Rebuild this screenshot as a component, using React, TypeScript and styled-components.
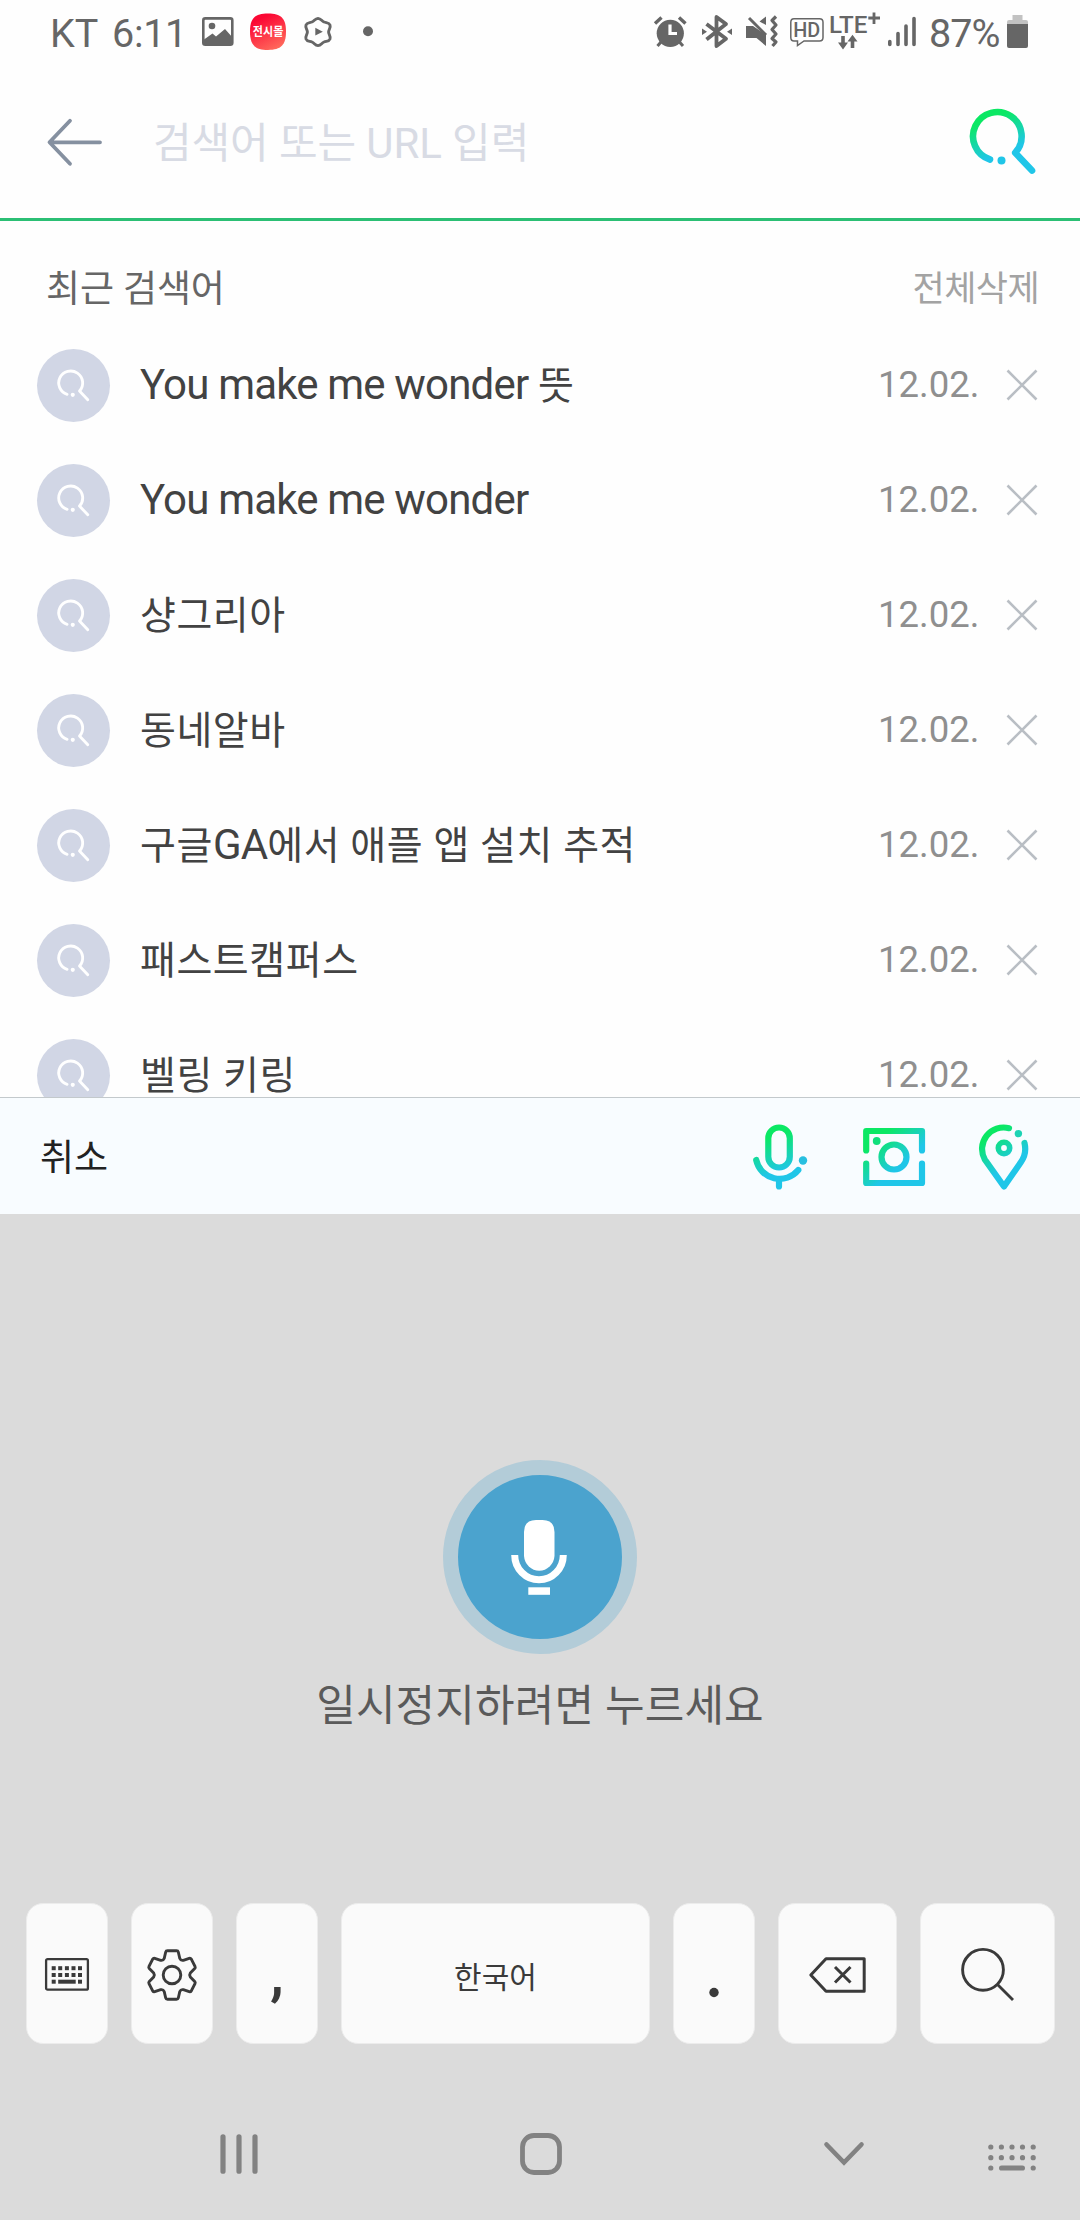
import React from 'react';
import styled, { createGlobalStyle } from 'styled-components';

const Global = createGlobalStyle`
  *, *::before, *::after { box-sizing: border-box; }
  body { margin: 0; background: #fff; }
  svg { display: block; flex: none; overflow: visible; }
`;

const Screen = styled.div`
  width: 1080px;
  height: 2220px;
  display: flex;
  flex-direction: column;
  overflow: hidden;
  background: #fefefe;
  font-family: Roboto, 'Noto Sans CJK KR', sans-serif;
`;

/* ---------- status bar ---------- */

const StatusBar = styled.header`
  height: 64px;
  flex: none;
  display: flex;
  justify-content: space-between;
  align-items: flex-start;
  padding: 11px 52px 0 50px;
  color: #666;
`;

const StatusGroup = styled.div`
  display: flex;
  align-items: center;
  height: 42px;
`;

const StatusText = styled.span<{ $width: number; $spacing?: number; $left?: number }>`
  width: ${(p) => p.$width}px;
  margin-left: ${(p) => p.$left ?? 0}px;
  font-size: 39.5px;
  line-height: 42px;
  letter-spacing: ${(p) => p.$spacing ?? 0}px;
  white-space: nowrap;
  padding-top: 3px;
`;

const StatusIcon = styled.svg<{ $left?: number }>`
  margin-left: ${(p) => p.$left ?? 0}px;
  height: 42px;
`;

/* ---------- search bar ---------- */

const SearchBar = styled.div`
  height: 157px;
  flex: none;
  display: flex;
  align-items: center;
  padding: 0 44px 0 47px;
  border-bottom: 3px solid #2bbf74;
`;

const Placeholder = styled.div`
  flex: 1;
  margin-left: 50px;
  padding-top: 5px;
  font-size: 42px;
  line-height: 60px;
  letter-spacing: -0.1px;
  color: #d8dbe4;
  white-space: nowrap;
`;

/* ---------- recent searches ---------- */

const Recent = styled.section`
  height: 876px;
  flex: none;
  overflow: hidden;
`;

const RecentHeader = styled.div`
  height: 107px;
  display: flex;
  justify-content: space-between;
  align-items: center;
  padding: 30px 41px 0 46px;
`;

const RecentTitle = styled.h2`
  margin: 0;
  font-size: 37px;
  font-weight: 400;
  line-height: 50px;
  letter-spacing: -0.1px;
  color: #666;
`;

const ClearAll = styled.button`
  padding: 0;
  border: 0;
  background: none;
  font: inherit;
  font-size: 35px;
  line-height: 50px;
  letter-spacing: -0.6px;
  color: #a3a3a3;
`;

const List = styled.ul`
  margin: 0;
  padding: 0;
  list-style: none;
`;

const Row = styled.li`
  height: 115px;
  display: flex;
  align-items: center;
  padding: 0 43px 0 37px;
`;

const Badge = styled.span`
  width: 73px;
  height: 73px;
  flex: none;
  display: grid;
  place-items: center;
  border-radius: 50%;
  background: #d1d6e5;
`;

const Term = styled.span`
  flex: 1;
  margin: 0 0 1px 30px;
  font-size: 42px;
  line-height: 42px;
  letter-spacing: -0.82px;
  color: #424242;
  white-space: nowrap;
`;

const Hangul = styled.span`
  font-size: 39px;
  line-height: 39px;
  letter-spacing: 0.55px;
`;

const DateText = styled.time`
  width: 129px;
  margin-bottom: 1px;
  font-size: 36.5px;
  line-height: 42px;
  color: #8f8f8f;
`;

/* ---------- toolbar ---------- */

const Toolbar = styled.div`
  height: 117px;
  flex: none;
  display: flex;
  align-items: center;
  padding: 2px 51px 0 40px;
  border-top: 1px solid #c3c9cc;
  background: #f8fcff;
`;

const Cancel = styled.button`
  margin-right: auto;
  padding: 4px 0 0;
  border: 0;
  background: none;
  font: inherit;
  font-size: 37px;
  line-height: 50px;
  letter-spacing: 0;
  color: #222;
`;

const ToolIcon = styled.svg<{ $gap?: number }>`
  margin-left: ${(p) => p.$gap ?? 0}px;
`;

/* ---------- keyboard ---------- */

const Keyboard = styled.main`
  flex: 1;
  display: flex;
  flex-direction: column;
  background: #dbdbdb;
`;

const VoicePanel = styled.div`
  height: 689px;
  flex: none;
  display: flex;
  flex-direction: column;
  align-items: center;
  padding-top: 246px;
`;

const MicButton = styled.button`
  width: 194px;
  height: 194px;
  border: 15.5px solid #b3ccd8;
  border-radius: 50%;
  background: #4ba3ce;
  display: flex;
  justify-content: center;
  padding: 45px 3px 0 0;
`;

const VoiceHint = styled.p`
  margin: 22px 0 0;
  font-size: 43px;
  line-height: 60px;
  letter-spacing: 0.15px;
  color: #5a5a5a;
  white-space: nowrap;
`;

const KeyRow = styled.div`
  flex: none;
  display: flex;
  gap: 23px;
  padding: 0 25px 0 26px;
`;

const Key = styled.button<{ $width?: number }>`
  width: ${(p) => p.$width ?? 82}px;
  flex: none;
  height: 141px;
  padding: 2px 0 0;
  display: flex;
  align-items: center;
  justify-content: center;
  border: 1px solid #ececec;
  border-radius: 17px;
  background: #fafafa;
  color: #3a3a3a;
  font: inherit;
  font-size: 30px;
`;

const Comma = styled.span`
  margin-top: -4px;
  font-size: 62px;
  font-weight: 500;
  line-height: 60px;
`;

const NavBar = styled.nav`
  flex: 1;
  display: flex;
  align-items: center;
  padding: 44px 44px 0 220px;
  color: #828282;
`;

const NavIcon = styled.svg<{ $gap?: number; $drop?: number }>`
  margin-left: ${(p) => p.$gap ?? 0}px;
  margin-top: ${(p) => p.$drop ?? 0}px;
`;

/* ---------- drawings ---------- */

const LENS_PATH = 'M20 51.5 A24.3 24.3 0 1 1 45.2 44.8 L62 62.6';

const SearchLogo = () => (
  <svg width="66" height="67" viewBox="0 0 66 67" fill="none">
    <defs>
      <linearGradient id="lens" gradientUnits="userSpaceOnUse" x1="19" y1="8" x2="35" y2="46">
        <stop offset="0.08" stopColor="#0be864" />
        <stop offset="0.95" stopColor="#20c6e8" />
      </linearGradient>
    </defs>
    <path d={LENS_PATH} stroke="url(#lens)" strokeWidth="6.6" strokeLinecap="round" strokeLinejoin="round" />
    <circle cx="31.5" cy="52.5" r="4" fill="#20c6e8" />
  </svg>
);

const SmallLens = () => (
  <svg width="33" height="33" viewBox="0 0 66 67" fill="none">
    <path d={LENS_PATH} stroke="#fff" strokeWidth="5.8" strokeLinecap="round" strokeLinejoin="round" />
    <circle cx="31.5" cy="52.5" r="4.2" fill="#fff" />
  </svg>
);

const BackArrow = () => (
  <svg width="56" height="48" viewBox="0 -1.3 56 48" fill="none" stroke="#8590a0" strokeWidth="3.8" strokeLinecap="round" strokeLinejoin="round">
    <path d="M23 2.5 L2.5 24 L23 45.5 M3 24 H53" />
  </svg>
);

const Cross = () => (
  <svg width="30" height="31" viewBox="0 0 30 31" stroke="#b9bec4" strokeWidth="2.6" fill="none">
    <path d="M0.5 0.5 L29.5 29.5 M29.5 0.5 L0.5 29.5" />
  </svg>
);

const StatusLeft = () => (
  <StatusGroup>
    <StatusText $width={62}>KT</StatusText>
    <StatusText $width={90} $spacing={-0.3}>6:11</StatusText>
    <StatusIcon width="32" viewBox="0 0 32 42">
      <rect x="1.3" y="7.4" width="29" height="26.4" rx="2" fill="none" stroke="#666" strokeWidth="2.6" />
      <path d="M2 28.500 L10.500 22.500 L14 25.500 L23 18 L31 27 V34 H2 Z" fill="#666" />
      <circle cx="10" cy="15" r="3.3" fill="#666" />
    </StatusIcon>
    <StatusIcon width="36" $left={16} viewBox="0 0 36 42">
      <defs>
        <linearGradient id="mall" x1="0.2" y1="0" x2="0.7" y2="1">
          <stop offset="0.15" stopColor="#fb0734" />
          <stop offset="1" stopColor="#ff6a5c" />
        </linearGradient>
      </defs>
      <path d="M18 2.4 C31 2.4 36 7 36 20.5 C36 34 31 38.900 18 38.900 C5 38.900 0 34 0 20.500 C0 7 5 2.400 18 2.400 Z" fill="url(#mall)" />
      <text x="2.800" y="25" fontSize="12" fontWeight="700" textLength="30.500" lengthAdjust="spacingAndGlyphs" fill="#fff" fontFamily="'Noto Sans CJK KR', sans-serif">전시몰</text>
    </StatusIcon>
    <StatusIcon width="28" $left={18} viewBox="0 0 28 42" fill="none">
      <path d="M14 7.400 C17 7.600 17.600 10 20 11 C22.500 12 25 11.400 26 14 C27 16.800 24.600 18.400 24.600 21 C24.600 23.600 27 25.200 26 28 C25 30.600 22.500 30 20 31 C17.600 32 17 34.400 14 34.600 C11 34.400 10.400 32 8 31 C5.500 30 3 30.600 2 28 C1 25.200 3.400 23.600 3.400 21 C3.400 18.400 1 16.800 2 14 C3 11.400 5.500 12 8 11 C10.400 10 11 7.600 14 7.400 Z" stroke="#666" strokeWidth="2.900" />
      <path d="M11.300 16.800 L18.800 20.700 L11.300 24.600 Z" fill="#666" />
    </StatusIcon>
    <StatusIcon width="10" $left={31} viewBox="0 0 10 42"><circle cx="5" cy="20.200" r="5" fill="#666" /></StatusIcon>
  </StatusGroup>
);

const StatusRight = () => (
  <StatusGroup>
    <StatusIcon width="33" viewBox="0 0 33 42" fill="none" stroke="#666">
      <circle cx="16.300" cy="22.300" r="13.600" fill="#666" stroke="none" />
      <path d="M1 12.500 L7.500 6.500 M31.500 12.500 L25 6.500" strokeWidth="3.400" />
      <path d="M7 31 L3.500 35 M25.500 31 L29 35" strokeWidth="3" />
      <path d="M16 13.500 V22.500 H23" stroke="#fff" strokeWidth="3.200" />
    </StatusIcon>
    <StatusIcon width="30" $left={15} viewBox="0 0 30 42" fill="none" stroke="#666" strokeWidth="3.800">
      <path d="M4.500 13 L24 27.800 L14.500 35 V6 L24 13 L4.500 28.500" strokeLinejoin="round" />
      <path d="M0 17.500 L5 20.700 L0 24 Z M30 17.500 L25 20.700 L30 24 Z" fill="#666" stroke="none" />
    </StatusIcon>
    <StatusIcon width="32" $left={14} viewBox="0 0 32 42" fill="none">
      <path d="M0 15 L7 15 L20 24 V35 L10.500 27 H0 Z M20 5.500 V14 L13.500 10.500 Z" fill="#666" />
      <path d="M3 7 L20 24" stroke="#666" strokeWidth="3" />
      <path d="M30 5.500 L26 9.500 L30 14 L26 18.500 L30 23 L26 27.500 L30 31 L26.500 35" stroke="#666" strokeWidth="3.200" strokeLinejoin="round" />
    </StatusIcon>
    <StatusIcon width="34" $left={12} viewBox="0 0 34 42" fill="none">
      <path d="M4 7.800 H29.500 Q33 7.800 33 11.300 V26.500 Q33 30 29.500 30 H14 L7.500 34.500 V30 H4 Q0.800 30 0.800 26.500 V11.300 Q0.800 7.800 4 7.800 Z" stroke="#666" strokeWidth="1.500" />
      <text x="3.300" y="26.300" fontSize="20.500" fontWeight="500" textLength="27" lengthAdjust="spacingAndGlyphs" fill="#666">HD</text>
    </StatusIcon>
    <StatusIcon width="50" $left={6} viewBox="0 0 50 42">
      <text x="-1" y="22.200" fontSize="24" fontWeight="500" textLength="38.500" lengthAdjust="spacingAndGlyphs" fill="#666">LTE</text>
      <path d="M44 1.500 V13 M38.300 7 H50" stroke="#666" strokeWidth="2.800" />
      <path d="M13 25 V33 M22.500 37 V28" stroke="#666" strokeWidth="3.600" />
      <path d="M8 31.500 H18 L13 38.500 Z M17.500 30.500 H27.500 L22.500 23.800 Z" fill="#666" />
    </StatusIcon>
    <StatusIcon width="28" $left={8} viewBox="0 0 28 42" stroke="#666" strokeWidth="3.600" strokeLinecap="round">
      <path d="M1.800 30.500 V33.500 M10 22.500 V33.500 M18 15 V33.500 M26 7.500 V33.500" />
    </StatusIcon>
    <StatusText $left={13} $width={78} $spacing={-1}>87%</StatusText>
    <StatusIcon width="21" viewBox="0 0 21 42">
      <path d="M5.500 4 H15.500 V9 H19 Q21 9 21 11 V14 H0 V11 Q0 9 2 9 H5.500 Z" fill="#c2c2c2" />
      <path d="M0 13 H21 V35 Q21 37 19 37 H2 Q0 37 0 35 Z" fill="#666" />
    </StatusIcon>
  </StatusGroup>
);

const MicTool = () => (
  <ToolIcon width="55" height="66" viewBox="0 0 55 66" fill="none">
    <defs>
      <linearGradient id="mic" gradientUnits="userSpaceOnUse" x1="14" y1="12" x2="27" y2="52">
        <stop offset="0.050" stopColor="#0be864" />
        <stop offset="0.900" stopColor="#20c6e8" />
      </linearGradient>
    </defs>
    <g stroke="url(#mic)" strokeWidth="6.200" strokeLinecap="round">
      <rect x="15.300" y="3.500" width="21.500" height="40" rx="10.750" />
      <path d="M3.200 36 A24 24 0 0 0 45.300 46 M26 58 V62.500" />
    </g>
    <circle cx="50" cy="36.500" r="4.200" fill="#28bfe0" />
  </ToolIcon>
);

const CameraTool = () => (
  <ToolIcon width="62" height="60" $gap={55} viewBox="0 0 62 60" fill="none">
    <defs>
      <linearGradient id="cam" gradientUnits="userSpaceOnUse" x1="12" y1="8" x2="40" y2="40">
        <stop offset="0.120" stopColor="#0be864" />
        <stop offset="0.920" stopColor="#20c6e8" />
      </linearGradient>
    </defs>
    <g stroke="url(#cam)" strokeWidth="6.200" strokeLinecap="round" strokeLinejoin="round">
      <path d="M3.200 23.500 V4 H59 V23.500 M3.200 36.500 V56 H59 V36.500" />
      <circle cx="31" cy="30" r="12.500" />
    </g>
    <circle cx="13.700" cy="14" r="3.900" fill="#10df7c" />
  </ToolIcon>
);

const PinTool = () => (
  <ToolIcon width="50" height="66" $gap={54} viewBox="0 0 50 66" fill="none">
    <defs>
      <linearGradient id="pin" gradientUnits="userSpaceOnUse" x1="8" y1="10" x2="32" y2="44">
        <stop offset="0.080" stopColor="#0be864" />
        <stop offset="0.900" stopColor="#20c6e8" />
      </linearGradient>
    </defs>
    <g stroke="url(#pin)" strokeWidth="6.200" strokeLinecap="round" strokeLinejoin="round">
      <path d="M30 4.200 A21.500 21.500 0 0 0 5.800 35.500 L25 62.500 L42 38 Q48 29.500 45.500 19" />
      <circle cx="25" cy="24" r="5.700" strokeWidth="5.600" />
    </g>
    <circle cx="39.400" cy="9.600" r="3.700" fill="#1cd3b4" />
  </ToolIcon>
);

const WhiteMic = () => (
  <svg width="56" height="75" viewBox="0 0 56 75">
    <path d="M13 12 Q13 0 25 0 H31.500 Q43.500 0 43.500 12 V36 A15.300 16 0 0 1 13 36 Z" fill="#fff" />
    <path d="M3.700 35 A24.300 24.800 0 0 0 52.300 35" fill="none" stroke="#fff" strokeWidth="7" />
    <rect x="17.300" y="67.300" width="21.700" height="7.500" fill="#fff" />
  </svg>
);

const KeyboardGlyph = () => (
  <svg width="44" height="33" viewBox="0 0 44 33" fill="#3a3a3a">
    <rect x="1.100" y="1.100" width="41.800" height="30.600" rx="1.500" fill="none" stroke="#3a3a3a" strokeWidth="2.300" />
    {[8.200, 15].map((y) => [6.700, 13.200, 19.900, 26.500, 33].map((x) => <rect key={`${x}-${y}`} x={x} y={y} width="4" height="4" />))}
    <rect x="6.700" y="21.700" width="4" height="4" />
    <rect x="13.200" y="21.700" width="17.500" height="4" />
    <rect x="33" y="21.700" width="4" height="4" />
  </svg>
);

const GearGlyph = () => (
  <svg width="50" height="52" viewBox="0 0 50 52" fill="none" stroke="#3a3a3a" strokeWidth="2.900" strokeLinejoin="round">
    <path d="M20.500 1.700 H29.500 Q31 1.700 31.300 3 L32.800 9.500 Q33.800 11.800 36.300 11.300 L42.200 9.300 Q43.600 9 44.300 10.100 L48 17.300 Q48.600 18.500 47.700 19.500 L43.300 24 Q42 26 43.300 28 L47.700 32.500 Q48.600 33.500 48 34.700 L44.300 41.900 Q43.600 43 42.200 42.700 L36.300 40.700 Q33.800 40.200 32.800 42.500 L31.300 49 Q31 50.300 29.500 50.300 H20.500 Q19 50.300 18.700 49 L17.200 42.500 Q16.200 40.200 13.700 40.700 L7.800 42.700 Q6.400 43 5.700 41.900 L2 34.700 Q1.400 33.500 2.300 32.500 L6.700 28 Q8 26 6.700 24 L2.300 19.500 Q1.400 18.500 2 17.300 L5.700 10.100 Q6.400 9 7.800 9.300 L13.700 11.300 Q16.200 11.800 17.200 9.500 L18.700 3 Q19 1.700 20.500 1.700 Z" />
    <circle cx="25" cy="26" r="8.800" />
  </svg>
);

const DotGlyph = () => (
  <svg width="10" height="44" viewBox="0 0 10 44"><circle cx="5" cy="39.500" r="4.700" fill="#3a3a3a" /></svg>
);

const BackspaceGlyph = () => (
  <svg width="57" height="36" viewBox="0 0 57 36" fill="none" stroke="#3a3a3a" strokeWidth="3" strokeLinejoin="round">
    <path d="M17 1.800 H55.200 V34.200 H17 L1.800 18 Z" />
    <path d="M26 10 L41.500 25.500 M41.500 10 L26 25.500" />
  </svg>
);

const FindGlyph = () => (
  <svg width="53" height="53" viewBox="0 0 53 53" fill="none" stroke="#3a3a3a" strokeWidth="2.900">
    <circle cx="22" cy="21.800" r="20.400" />
    <path d="M36.500 36.500 L52 52" />
  </svg>
);

const terms: React.ReactNode[] = [
  <>You make me wonder <Hangul>뜻</Hangul></>,
  'You make me wonder',
  <Hangul>샹그리아</Hangul>,
  <Hangul>동네알바</Hangul>,
  <><Hangul>구글</Hangul>GA<Hangul>에서 애플 앱 설치 추적</Hangul></>,
  <Hangul>패스트캠퍼스</Hangul>,
  <Hangul>벨링 키링</Hangul>,
];

export default function App() {
  return (
    <Screen>
      <Global />
      <StatusBar>
        <StatusLeft />
        <StatusRight />
      </StatusBar>

      <SearchBar>
        <BackArrow />
        <Placeholder>검색어 또는 URL 입력</Placeholder>
        <SearchLogo />
      </SearchBar>

      <Recent>
        <RecentHeader>
          <RecentTitle>최근 검색어</RecentTitle>
          <ClearAll>전체삭제</ClearAll>
        </RecentHeader>
        <List>
          {terms.map((term, i) => (
            <Row key={i}>
              <Badge><SmallLens /></Badge>
              <Term>{term}</Term>
              <DateText>12.02.</DateText>
              <Cross />
            </Row>
          ))}
        </List>
      </Recent>

      <Toolbar>
        <Cancel>취소</Cancel>
        <MicTool />
        <CameraTool />
        <PinTool />
      </Toolbar>

      <Keyboard>
        <VoicePanel>
          <MicButton><WhiteMic /></MicButton>
          <VoiceHint>일시정지하려면 누르세요</VoiceHint>
        </VoicePanel>
        <KeyRow>
          <Key><KeyboardGlyph /></Key>
          <Key><GearGlyph /></Key>
          <Key><Comma>,</Comma></Key>
          <Key $width={309}>한국어</Key>
          <Key><DotGlyph /></Key>
          <Key $width={119}><BackspaceGlyph /></Key>
          <Key $width={135}><FindGlyph /></Key>
        </KeyRow>
        <NavBar>
          <NavIcon width="38" height="40" viewBox="0 0 38 40" stroke="#828282" strokeWidth="5.200" strokeLinecap="round">
            <path d="M3 2.800 V37.200 M19 2.800 V37.200 M35 2.800 V37.200" />
          </NavIcon>
          <NavIcon $gap={262} width="42" height="42" viewBox="0 0 42 42" fill="none">
            <rect x="2.500" y="2.500" width="37" height="37" rx="11.500" stroke="#828282" strokeWidth="4.800" />
          </NavIcon>
          <NavIcon $gap={262} width="40" height="24" viewBox="0 0 40 24" fill="none" stroke="#828282" strokeWidth="4.600" strokeLinecap="round">
            <path d="M2.500 2.500 L20 20.500 L37.500 2.500" />
          </NavIcon>
          <NavIcon $gap={124} $drop={6} width="48" height="27" viewBox="0 0 48 27" fill="#828282">
            {[3, 13.700].map((y) => [2.800, 13.400, 24, 34.500, 45.200].map((x) => <circle key={`${x}-${y}`} cx={x} cy={y} r="2.600" />))}
            <circle cx="2.800" cy="24" r="2.600" />
            <rect x="11" y="21.400" width="26" height="5.200" rx="2.600" />
            <circle cx="45.200" cy="24" r="2.600" />
          </NavIcon>
        </NavBar>
      </Keyboard>
    </Screen>
  );
}
